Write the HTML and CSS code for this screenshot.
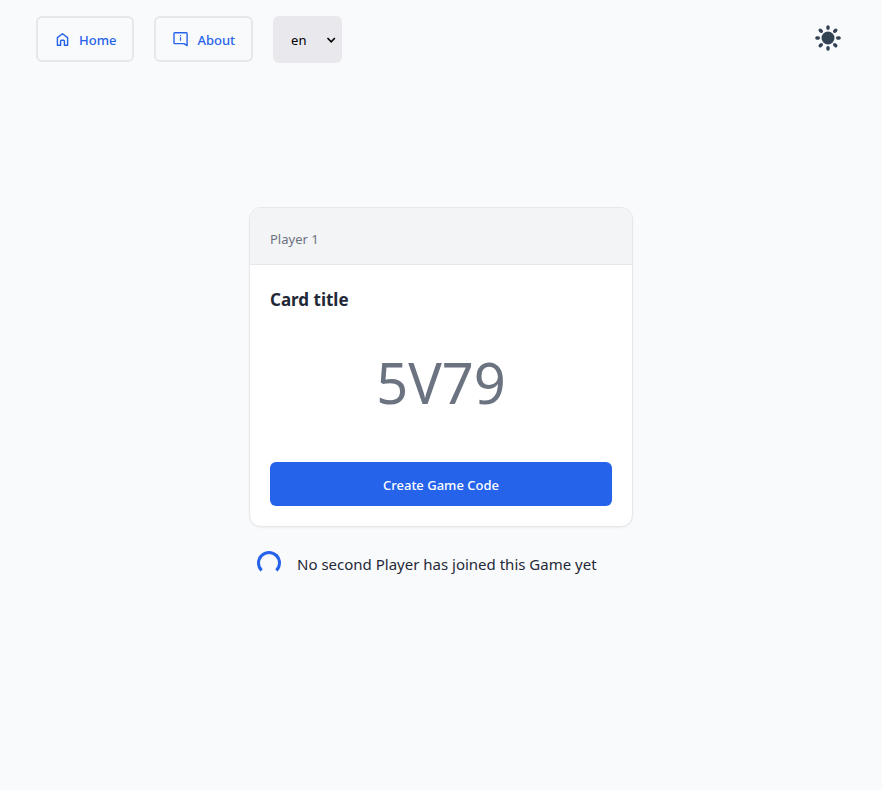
FILE: index.html
```html
<!DOCTYPE html>
<html lang="en">
<head>
  <meta charset="utf-8">
  <meta name="viewport" content="width=device-width, initial-scale=1">
  <title>Game</title>
  <link rel="stylesheet" href="styles.css">
</head>
<body>
  <header class="topbar">
    <nav class="nav">
      <a class="nav-link" href="#home">
        <svg class="icon" viewBox="0 0 16 16" fill="none" stroke="currentColor" stroke-width="1.400" stroke-linejoin="round" aria-hidden="true"><path d="M3.400 5.600 8.500 1.700l5.100 3.900v7.700h-3.200V9.200a1 1 0 0 0-1-1H7.600a1 1 0 0 0-1 1v4.100H3.400z"/></svg>
        <span>Home</span>
      </a>
      <a class="nav-link" href="#about">
        <svg class="icon" viewBox="0 0 16 16" fill="none" stroke="currentColor" stroke-width="1.400" stroke-linejoin="round" aria-hidden="true"><path d="M2.800.800h11.500a.8.800 0 0 1 .8.800v12l-3-2H2.800a.8.800 0 0 1-.8-.8V1.600a.8.800 0 0 1 .8-.8z"/><path stroke-width="1.200" d="M8.500 3.100v1.200M8.500 5.300v3.500"/></svg>
        <span>About</span>
      </a>
      <div class="language">
        <select class="language-select" aria-label="Language">
          <option>en</option>
          <option>de</option>
        </select>
        <svg class="chevron" viewBox="0 0 10 6" fill="none" stroke="currentColor" stroke-width="1.600" aria-hidden="true"><path d="M1.500 1l3.700 3.800L8.900 1"/></svg>
      </div>
    </nav>
    <button class="theme-toggle" type="button" aria-label="Toggle theme">
      <svg viewBox="0 0 28 28" fill="currentColor" stroke="currentColor" stroke-linecap="round" aria-hidden="true">
        <circle cx="14" cy="14" r="6.500" stroke="none"/>
        <path stroke-width="3.400" d="M14 2.900v1.400M14 23.700v1.400M2.900 14h1.400M23.700 14h1.400M6.200 6.200l1.100 1.100M20.700 20.700l1.100 1.100M6.200 21.800l1.100-1.100M20.700 7.300l1.100-1.100"/>
      </svg>
    </button>
  </header>
  <main class="main">
    <div class="lobby">
      <section class="card">
        <p class="card-header">Player 1</p>
        <div class="card-body">
          <h1 class="card-title">Card title</h1>
          <p class="game-code">5V79</p>
          <button class="create-button" type="button">Create Game Code</button>
        </div>
      </section>
      <div class="status" role="status">
        <span class="spinner"></span>
        <span>No second Player has joined this Game yet</span>
      </div>
    </div>
  </main>
</body>
</html>
```

FILE: styles.css
```css
* {
  box-sizing: border-box;
}

body {
  margin: 0;
  min-height: 100vh;
  display: flex;
  flex-direction: column;
  background: #f9fafb;
  color: #1f2937;
  font-family: "Noto Sans", sans-serif;
  font-size: 15px;
  line-height: 24px;
}

p,
h1 {
  margin: 0;
}

.topbar {
  height: 80px;
  padding: 16px 40px 0 36px;
  display: flex;
  justify-content: space-between;
  align-items: flex-start;
}

.nav {
  display: flex;
  gap: 20px;
}

.nav-link {
  display: flex;
  align-items: center;
  gap: 9px;
  height: 46px;
  padding: 2px 16px 0;
  border: 2px solid #e5e7eb;
  border-radius: 6px;
  color: #2563eb;
  font-size: 13px;
  font-weight: 500;
  line-height: 20px;
  text-decoration: none;
}

.icon {
  width: 16px;
  height: 16px;
}

.language {
  position: relative;
}

.language-select {
  appearance: none;
  width: 69px;
  height: 47px;
  padding: 0 18px;
  border: 0;
  border-radius: 6px;
  background: #e9e9ed;
  color: #000;
  font: inherit;
  font-size: 13px;
}

.chevron {
  position: absolute;
  top: 21px;
  right: 6px;
  width: 10px;
  height: 6px;
  color: #000;
  pointer-events: none;
}

.theme-toggle {
  margin-top: 8px;
  padding: 0;
  border: 0;
  background: none;
  color: #334155;
}

.theme-toggle svg {
  display: block;
  width: 28px;
  height: 28px;
}

.main {
  flex: 1;
  display: flex;
  justify-content: center;
  align-items: center;
  padding: 0 16px 80px;
}

.lobby {
  width: 100%;
  max-width: 384px;
}

.card {
  border: 1px solid #e5e7eb;
  border-radius: 12px;
  background: #fff;
  box-shadow: 0 1px 2px rgba(0, 0, 0, 0.05);
  overflow: hidden;
}

.card-header {
  padding: 19px 20px 13px;
  border-bottom: 1px solid #e5e7eb;
  background: #f3f4f6;
  color: #6b7280;
  font-size: 13px;
}

.card-body {
  padding: 20px;
}

.card-title {
  font-size: 17px;
  font-weight: 700;
  line-height: 30px;
}

.game-code {
  padding: 29px 0 42px;
  color: #6b7280;
  font-size: 56px;
  line-height: 76px;
  text-align: center;
}

.create-button {
  display: block;
  width: 100%;
  height: 44px;
  padding: 2px 16px 0;
  border: 0;
  border-radius: 6px;
  background: #2563eb;
  color: #fff;
  font: inherit;
  font-size: 13px;
  font-weight: 500;
}

.status {
  display: flex;
  gap: 16px;
  padding: 24px 8px 6px;
  line-height: 26px;
}

.spinner {
  width: 24px;
  height: 24px;
  flex: none;
  border: 3px solid #2563eb;
  border-bottom-color: transparent;
  border-radius: 50%;
}
```
